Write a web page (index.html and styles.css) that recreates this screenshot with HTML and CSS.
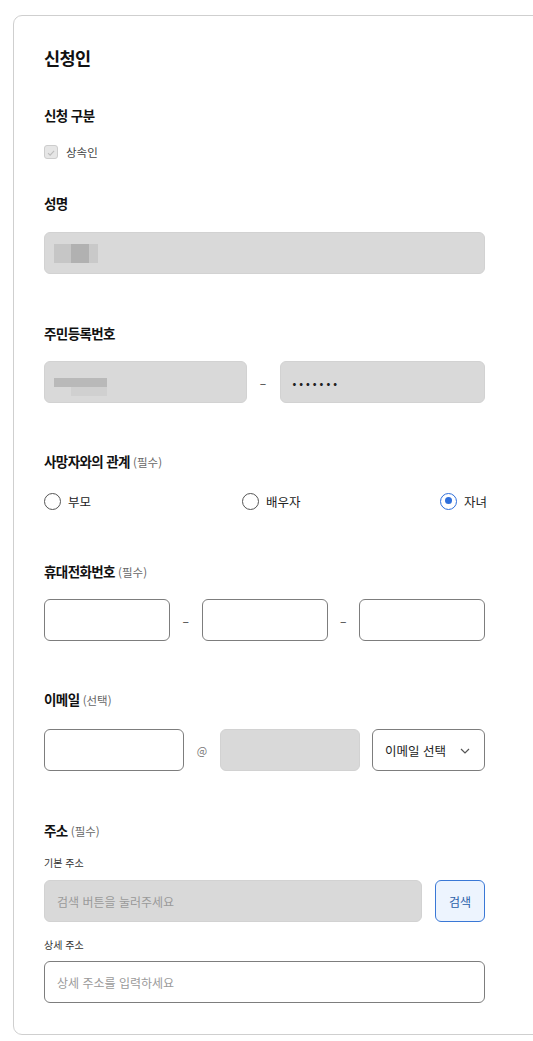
FILE: index.html
```html
<!DOCTYPE html>
<html lang="ko">
<head>
<meta charset="utf-8">
<link rel="stylesheet" href="styles.css">
</head>
<body>
<div class="card">
  <h2 class="title">신청인</h2>

  <div class="label sub-head">신청 구분</div>
  <div class="check-row">
    <span class="checkbox"><svg viewBox="0 0 14 14" width="14" height="14"><path d="M3.5 7.2 L6 9.6 L10.6 4.6" fill="none" stroke="#bdbdbd" stroke-width="1.3"/></svg></span>
    <span class="check-label">상속인</span>
  </div>

  <div class="label name-label">성명</div>
  <div class="field gray blur-field">
    <span class="blur b1"></span><span class="blur b2"></span><span class="blur b3"></span>
  </div>

  <div class="label section">주민등록번호</div>
  <div class="row">
    <div class="field gray grow blur-field">
      <span class="rrn-blur"><span class="r1"></span><span class="r2"></span></span>
    </div>
    <span class="dash w33">–</span>
    <div class="field gray grow dots">•••••••</div>
  </div>

  <div class="label section rel-label">사망자와의 관계 <span class="opt">(필수)</span></div>
  <div class="radios">
    <label class="radio-item"><span class="radio"></span><span>부모</span></label>
    <label class="radio-item"><span class="radio"></span><span>배우자</span></label>
    <label class="radio-item"><span class="radio on"></span><span>자녀</span></label>
  </div>

  <div class="label section phone-label">휴대전화번호 <span class="opt">(필수)</span></div>
  <div class="row">
    <div class="field white grow"></div>
    <span class="dash w31">–</span>
    <div class="field white grow"></div>
    <span class="dash w31">–</span>
    <div class="field white grow"></div>
  </div>

  <div class="label section email-label">이메일 <span class="opt">(선택)</span></div>
  <div class="row">
    <div class="field white w140"></div>
    <span class="at">@</span>
    <div class="field gray w140"></div>
    <div class="field white select">이메일 선택
      <svg class="chev" viewBox="0 0 10 6" width="10" height="6"><path d="M1 1 L5 5 L9 1" fill="none" stroke="#555" stroke-width="1.2"/></svg>
    </div>
  </div>

  <div class="label section">주소 <span class="opt">(필수)</span></div>
  <div class="small-label basic">기본 주소</div>
  <div class="row addr-row">
    <div class="field gray grow placeholder">검색 버튼을 눌러주세요</div>
    <button class="search-btn">검색</button>
  </div>
  <div class="small-label detail">상세 주소</div>
  <div class="field white placeholder">상세 주소를 입력하세요</div>
</div>
</body>
</html>
```

FILE: styles.css
```css
html, body {
  margin: 0;
  padding: 0;
  overflow: hidden;
  background: #ffffff;
}
body {
  font-family: "Noto Sans CJK KR", "Noto Sans", sans-serif;
  color: #222;
}
.card {
  margin: 15px 0 0 13px;
  width: 540px;
  box-sizing: border-box;
  border: 1px solid #cfcfcf;
  border-radius: 9px;
  padding: 29px 30px 31px 30px;
}
.card > * {
  width: 441px;
}
.title {
  margin: 0;
  font-size: 17.5px;
  line-height: 26px;
  height: 26px;
  font-weight: 700;
  letter-spacing: -0.6px;
  color: #111;
}
.label {
  font-size: 13.5px;
  line-height: 20px;
  height: 20px;
  font-weight: 700;
  color: #111;
  letter-spacing: -0.6px;
  white-space: nowrap;
}
.opt {
  font-size: 11.5px;
  line-height: 1;
  font-weight: 400;
  color: #666;
  letter-spacing: 0;
}
.sub-head {
  margin-top: 34px;
}
.check-row {
  margin-top: 17px;
  height: 20px;
  display: flex;
  align-items: center;
  gap: 8px;
}
.checkbox {
  width: 14px;
  height: 14px;
  box-sizing: border-box;
  border: 1px solid #cdcdcd;
  border-radius: 3px;
  background: #e6e6e6;
  display: flex;
}
.check-label {
  font-size: 11.5px;
  color: #444;
}
.name-label {
  margin-top: 31px;
  margin-bottom: 19px;
}
.section {
  margin-top: 49px;
  margin-bottom: 18px;
}
.rel-label {
  margin-top: 48px;
}
.phone-label {
  margin-top: 50px;
}
.email-label {
  margin-top: 48px;
  margin-bottom: 20px;
}
.field {
  height: 42px;
  box-sizing: border-box;
  border-radius: 6px;
  display: flex;
  align-items: center;
  padding: 0 12px;
  font-size: 12px;
}
.gray {
  background: #d9d9d9;
  border: 1px solid #d2d2d2;
}
.white {
  background: #fff;
  border: 1px solid #7d7d7d;
}
.row {
  display: flex;
  align-items: center;
}
.grow {
  flex: 1;
  min-width: 0;
}
.dash {
  text-align: center;
  font-size: 12px;
  color: #333;
}
.w33 { width: 33px; }
.w31 { width: 31.5px; }
.w140 { width: 140px; flex: none; }
.at {
  width: 36px;
  text-align: center;
  font-size: 11px;
  color: #777;
}
.select {
  margin-left: 12px;
  width: 113px;
  flex: none;
  font-size: 12.5px;
  color: #222;
  justify-content: space-between;
  padding: 0 14px 0 12px;
}
.chev {
  margin-top: 1px;
}
.blur-field {
  padding-left: 9px;
}
.blur {
  display: inline-block;
  height: 19px;
}
.b1 { width: 17px; background: #c6c6c6; }
.b2 { width: 18px; background: #b1b1b1; }
.b3 { width: 9px; background: #c9c9c9; }
.rrn-blur {
  display: flex;
  flex-direction: column;
  margin-top: 10px;
}
.r1 { width: 53px; height: 9px; background: #b9b9b9; }
.r2 { width: 36px; height: 9px; margin-left: 17px; background: #d0d0d0; }
.dots {
  font-size: 10px;
  font-weight: 700;
  letter-spacing: 3px;
  color: #222;
  padding-left: 12px;
}
.radios {
  display: grid;
  grid-template-columns: 198px 198px 45px;
  height: 20px;
  margin-top: 20px;
}
.radio-item {
  display: flex;
  align-items: center;
  gap: 7px;
  font-size: 12.5px;
  color: #222;
  white-space: nowrap;
}
.radio {
  width: 17px;
  height: 17px;
  box-sizing: border-box;
  border: 1px solid #555;
  border-radius: 50%;
  flex: none;
  position: relative;
}
.radio.on {
  border: 1.5px solid #2f6fdc;
}
.radio.on::after {
  content: "";
  position: absolute;
  left: 3.5px;
  top: 3.5px;
  width: 7px;
  height: 7px;
  border-radius: 50%;
  background: #2f6fdc;
}
.small-label {
  font-size: 10px;
  line-height: 16px;
  height: 16px;
  color: #333;
}
.basic {
  margin-top: -3px;
  margin-bottom: 9px;
}
.detail {
  margin-top: 15px;
  margin-bottom: 8px;
}
.placeholder {
  color: #9a9a9a;
  font-size: 12px;
  padding-left: 12px;
}
.search-btn {
  margin-left: 13px;
  width: 50px;
  height: 42px;
  box-sizing: border-box;
  border: 1px solid #3a78d6;
  border-radius: 6px;
  background: #edf4fe;
  color: #2a5ea8;
  font-family: "Noto Sans CJK KR", sans-serif;
  font-size: 12px;
  padding: 0;
}
```
